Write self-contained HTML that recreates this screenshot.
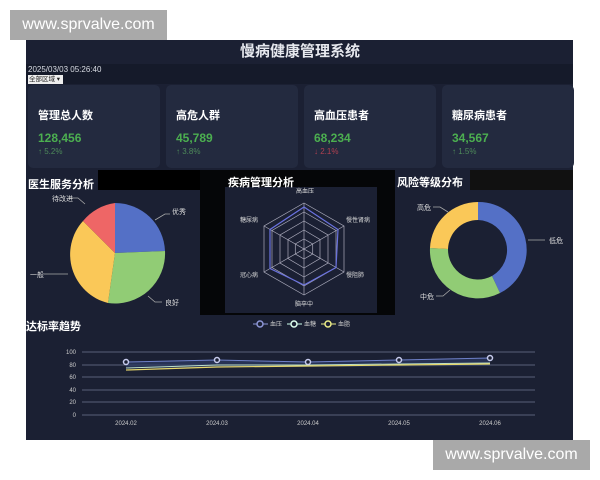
<!DOCTYPE html>
<html><head><meta charset="utf-8"><style>
*{margin:0;padding:0;box-sizing:border-box}
body{width:600px;height:480px;background:#fff;position:relative;overflow:hidden;font-family:"Liberation Sans","Noto Sans CJK SC",sans-serif}
.abs{position:absolute}
.wm{position:absolute;background:#a9a9a9;color:#fff;font-size:16px;line-height:30px;text-align:center;width:157px;height:30px}
.card{position:absolute;top:85px;width:132px;height:83px;background:#232a3f;border-radius:5px;color:#fff}
.card .t{position:absolute;left:10px;top:22px;font-size:11px;font-weight:bold}
.card .n{position:absolute;left:10px;top:46px;font-size:12px;font-weight:bold;color:#4caf50}
.card .p{position:absolute;left:10px;top:62px;font-size:8px;color:#4e8a5a}
.h{position:absolute;color:#fff;font-weight:bold;font-size:11px}
</style></head><body>
<div class="abs" style="left:26px;top:40px;width:547px;height:400px;background:#1b2033"></div>
<div class="abs" style="left:26px;top:64px;width:547px;height:20px;background:#151a2a"></div>
<div class="abs" style="left:0;top:40px;width:600px;text-align:center;color:#e6e8ee;font-size:15px;font-weight:bold;line-height:24px">慢病健康管理系统</div>
<div class="abs" style="left:28px;top:65px;color:#d8dbe3;font-size:8px">2025/03/03 05:26:40</div>
<div class="abs" style="left:28px;top:75px;width:35px;height:9px;background:#eee;color:#222;font-size:6.5px;line-height:9px;padding-left:1px">全部区域 ▾</div>
<div class="card" style="left:28px"><div class="t">管理总人数</div><div class="n">128,456</div><div class="p">↑ 5.2%</div></div>
<div class="card" style="left:166px"><div class="t">高危人群</div><div class="n">45,789</div><div class="p">↑ 3.8%</div></div>
<div class="card" style="left:304px"><div class="t">高血压患者</div><div class="n">68,234</div><div class="p" style="color:#b04050">↓ 2.1%</div></div>
<div class="card" style="left:442px"><div class="t">糖尿病患者</div><div class="n">34,567</div><div class="p">↑ 1.5%</div></div>
<!-- black areas -->
<div class="abs" style="left:98px;top:170px;width:282px;height:20px;background:#000"></div>
<div class="abs" style="left:200px;top:170px;width:195px;height:145px;background:#050608"></div>
<div class="abs" style="left:225px;top:187px;width:152px;height:126px;background:#1b2033"></div>
<div class="abs" style="left:470px;top:170px;width:103px;height:20px;background:#111"></div>
<div class="h" style="left:28px;top:176px">医生服务分析</div>
<div class="h" style="left:228px;top:174px">疾病管理分析</div>
<div class="h" style="left:397px;top:174px">风险等级分布</div>
<div class="h" style="left:26px;top:318px">达标率趋势</div>
<svg class="abs" style="left:0;top:0" width="600" height="480" font-family="Liberation Sans,Noto Sans CJK SC,sans-serif">
<g transform="translate(115,253)">
<path d="M0 0 L0 -50 A50 50 0 0 1 50 -2 Z" fill="#5470c6"/>
<path d="M0 0 L50 -2 A50 50 0 0 1 -7 50 Z" fill="#91cc75"/>
<path d="M0 0 L-7 50 A50 50 0 0 1 -32 -32 Z" fill="#fac858"/>
<path d="M0 0 L-32 -32 A50 50 0 0 1 0 -50 Z" fill="#ee6666"/>
</g>
<g stroke="#aaa" fill="none" stroke-width="0.8"><path d="M155 220 L165 214 L170 214"/><path d="M85 204 L78 198 L68 198"/><path d="M68 274 L44 274"/><path d="M148 296 L155 302 L162 302"/></g>
<g fill="#ddd" font-size="7"><text x="172" y="214">优秀</text><text x="52" y="201">待改进</text><text x="30" y="277">一般</text><text x="165" y="305">良好</text></g>
<!-- radar -->
<g transform="translate(304,249)" fill="none" stroke="#aab" stroke-width="0.7">
<polygon points="0,-46 40,-23 40,23 0,46 -40,23 -40,-23"/>
<polygon points="0,-37 32,-18.5 32,18.5 0,37 -32,18.5 -32,-18.5"/>
<polygon points="0,-28 24,-14 24,14 0,28 -24,14 -24,-14"/>
<polygon points="0,-19 16,-9.5 16,9.5 0,19 -16,9.5 -16,-9.5"/>
<polygon points="0,-10 8.7,-5 8.7,5 0,10 -8.7,5 -8.7,-5"/>
<path d="M0 -46 L0 46 M40 -23 L-40 23 M40 23 L-40 -23"/>
<polygon points="0,-42 34,-19.5 32,18.5 0,36 -34,19.5 -34,-19.5" stroke="#6a72e0" stroke-width="1.2"/>
</g>
<g fill="#ddd" font-size="6"><text x="296" y="193">高血压</text><text x="346" y="222">慢性肾病</text><text x="346" y="277">慢阻肺</text><text x="295" y="306">脑卒中</text><text x="240" y="222">糖尿病</text><text x="240" y="277">冠心病</text></g>
<!-- donut -->
<g transform="translate(478,250)">
<path d="M0 -48 A48 48 0 0 1 22 43 L14 26 A30 30 0 0 0 0 -30 Z" fill="#5470c6"/>
<path d="M22 43 A48 48 0 0 1 -48 -2 L-30 -1 A30 30 0 0 0 14 26 Z" fill="#91cc75"/>
<path d="M-48 -2 A48 48 0 0 1 0 -48 L0 -30 A30 30 0 0 0 -30 -1 Z" fill="#fac858"/>
</g>
<g stroke="#aaa" fill="none" stroke-width="0.8"><path d="M448 212 L440 207 L433 207"/><path d="M528 240 L545 240"/><path d="M450 290 L443 296 L436 296"/></g>
<g fill="#ddd" font-size="7"><text x="417" y="210">高危</text><text x="549" y="243">低危</text><text x="420" y="299">中危</text></g>
<!-- legend -->
<g font-size="6" fill="#ccc">
<path d="M253 324 H268" stroke="#8e97d8"/><circle cx="260" cy="324" r="3" fill="#1b2033" stroke="#8e97d8" stroke-width="1.5"/><text x="270" y="326">血压</text>
<path d="M287 324 H302" stroke="#cfe"/><circle cx="294" cy="324" r="3" fill="#1b2033" stroke="#dfe" stroke-width="1.5"/><text x="304" y="326">血糖</text>
<path d="M321 324 H336" stroke="#ee8"/><circle cx="328" cy="324" r="3" fill="#1b2033" stroke="#ee8" stroke-width="1.5"/><text x="338" y="326">血脂</text>
</g>
<g stroke="#6f7690" stroke-width="0.8"><path d="M82 352 H535 M82 365 H535 M82 377 H535 M82 390 H535 M82 402 H535 M82 415 H535"/></g>
<g fill="#ccc" font-size="6" text-anchor="end"><text x="76" y="354">100</text><text x="76" y="367">80</text><text x="76" y="379">60</text><text x="76" y="392">40</text><text x="76" y="404">20</text><text x="76" y="417">0</text></g>
<g fill="#ccc" font-size="6" text-anchor="middle"><text x="126" y="425">2024.02</text><text x="217" y="425">2024.03</text><text x="308" y="425">2024.04</text><text x="399" y="425">2024.05</text><text x="490" y="425">2024.06</text></g>
<path d="M126 362 L217 360 L308 362 L399 360 L490 358 L490 366 L126 368 Z" fill="#2c3a62" opacity="0.7"/>
<polyline points="126,368 217,365 308,365 399,364 490,363" fill="none" stroke="#bde0c8" stroke-width="1"/>
<polyline points="126,370 217,367 308,366 399,365 490,364" fill="none" stroke="#e6d66a" stroke-width="1.2"/>
<polyline points="126,362 217,360 308,362 399,360 490,358" fill="none" stroke="#6e80c8" stroke-width="1"/>
<g fill="#1b2033" stroke="#c8ccee" stroke-width="1.5"><circle cx="126" cy="362" r="2.5"/><circle cx="217" cy="360" r="2.5"/><circle cx="308" cy="362" r="2.5"/><circle cx="399" cy="360" r="2.5"/><circle cx="490" cy="358" r="2.5"/></g>
</svg>
<div class="wm" style="left:10px;top:10px">www.sprvalve.com</div>
<div class="wm" style="left:433px;top:440px">www.sprvalve.com</div>
</body></html>
